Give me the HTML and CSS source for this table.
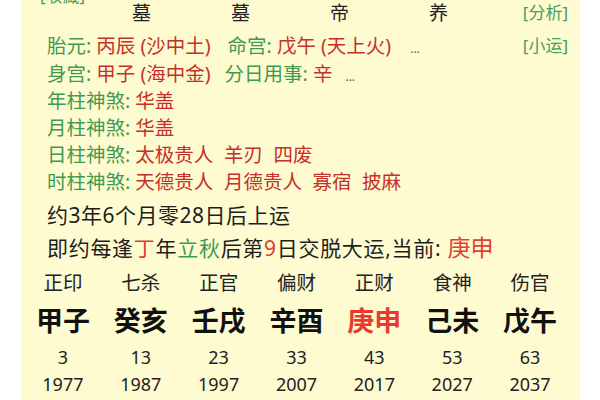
FILE: index.html
```html
<!DOCTYPE html>
<html lang="zh">
<head>
<meta charset="utf-8">
<link rel="stylesheet" href="styles.css">
</head>
<body>
<div class="panel">
  <div class="fav">[收藏]</div>
  <div class="row0">
    <div class="cells">
      <span class="cell">墓</span><span class="cell">墓</span><span class="cell">帝</span><span class="cell">养</span>
    </div>
    <span class="link">[分析]</span>
  </div>
  <div class="info">
    <div class="line"><span class="g">胎元:</span> <span class="r">丙辰 (沙中土)</span><span class="g gap1">命宫:</span> <span class="r">戊午 (天上火)</span><span class="dots d1">...</span><span class="link right">[小运]</span></div>
    <div class="line"><span class="g">身宫:</span> <span class="r">甲子 (海中金)</span><span class="g gap2">分日用事:</span> <span class="r">辛</span><span class="dots d2">...</span></div>
    <div class="line"><span class="g">年柱神煞:</span> <span class="r">华盖</span></div>
    <div class="line"><span class="g">月柱神煞:</span> <span class="r">华盖</span></div>
    <div class="line"><span class="g">日柱神煞:</span> <span class="r ws">太极贵人 羊刃 四废</span></div>
    <div class="line"><span class="g">时柱神煞:</span> <span class="r ws">天德贵人 月德贵人 寡宿 披麻</span></div>
  </div>
  <div class="luck">
    <div class="lline first">约3年6个月零28日后上运</div>
    <div class="lline wide">即约每逢<span class="r">丁</span>年<span class="g">立秋</span>后第<span class="r">9</span>日交脱大运,当前: <span class="cur">庚申</span></div>
  </div>
  <div class="grid">
    <div class="col"><div class="god">正印</div><div class="pz">甲子</div><div class="age">3</div><div class="yr">1977</div></div>
    <div class="col"><div class="god">七杀</div><div class="pz">癸亥</div><div class="age">13</div><div class="yr">1987</div></div>
    <div class="col"><div class="god">正官</div><div class="pz">壬戌</div><div class="age">23</div><div class="yr">1997</div></div>
    <div class="col"><div class="god">偏财</div><div class="pz">辛酉</div><div class="age">33</div><div class="yr">2007</div></div>
    <div class="col"><div class="god">正财</div><div class="pz now">庚申</div><div class="age">43</div><div class="yr">2017</div></div>
    <div class="col"><div class="god">食神</div><div class="pz">己未</div><div class="age">53</div><div class="yr">2027</div></div>
    <div class="col"><div class="god">伤官</div><div class="pz">戊午</div><div class="age">63</div><div class="yr">2037</div></div>
  </div>
</div>
</body>
</html>
```

FILE: styles.css
```css
html, body {
  margin: 0;
  padding: 0;
  background: #ffffff;
}
body {
  width: 600px;
  height: 400px;
  overflow: hidden;
  font-family: "Noto Sans", "Noto Sans CJK SC", sans-serif;
  color: #1e1e1e;
}
.panel {
  margin-left: 21px;
  width: 559px;
  height: 400px;
  background: #fefbd1;
  overflow: hidden;
}
.fav {
  height: 16px;
  margin-top: -12px;
  padding-left: 19px;
  font-size: 17px;
  line-height: 16px;
  color: #4c9d5c;
}
.row0 {
  height: 18px;
  display: flex;
  align-items: center;
  padding-right: 12px;
}
.cells {
  display: flex;
  padding-left: 71px;
  flex: 1;
}
.cell {
  width: 99px;
  text-align: center;
  font-size: 19px;
  line-height: 18px;
  color: #222;
}
.link {
  font-size: 17px;
  line-height: 18px;
  color: #4c9d5c;
}
.info {
  margin-top: 10.4px;
  padding-left: 26px;
  padding-right: 12px;
}
.line {
  position: relative;
  height: 27.2px;
  line-height: 27.2px;
  font-size: 19.5px;
  white-space: pre;
}
.line .right {
  position: absolute;
  right: 0;
  top: 0;
  line-height: 27.2px;
}
.g { color: #3f9a50; }
.r { color: #c5302a; }
.ws { word-spacing: 5.5px; }
.gap1 { margin-left: 17px; }
.gap2 { margin-left: 14px; }
.dots {
  font-size: 12px;
  color: #555;
}
.d1 { margin-left: 19px; }
.d2 { margin-left: 13px; }
.luck {
  margin-top: 3.4px;
  padding-left: 26px;
}
.lline {
  height: 32px;
  line-height: 32px;
  font-size: 21px;
  color: #1e1e1e;
  white-space: nowrap;
}
.lline.first {
  letter-spacing: 0.5px;
}
.lline.wide {
  letter-spacing: 0.7px;
}
.lline .g { color: #3f9a50; }
.lline .r { color: #e0402e; }
.cur {
  font-size: 23px;
  letter-spacing: 0;
  color: #e0402e;
}
.grid {
  display: grid;
  grid-template-columns: repeat(7, 1fr);
  width: 545px;
  margin-left: 3px;
  margin-top: 5px;
  text-align: center;
}
.god {
  height: 30px;
  line-height: 30px;
  font-size: 19.5px;
  color: #222;
}
.pz {
  height: 46px;
  line-height: 46px;
  font-size: 27px;
  font-weight: bold;
  color: #111;
}
.pz.now { color: #e83a30; }
.age,
.yr {
  height: 27px;
  line-height: 27px;
  font-size: 18px;
  color: #222;
}
```
